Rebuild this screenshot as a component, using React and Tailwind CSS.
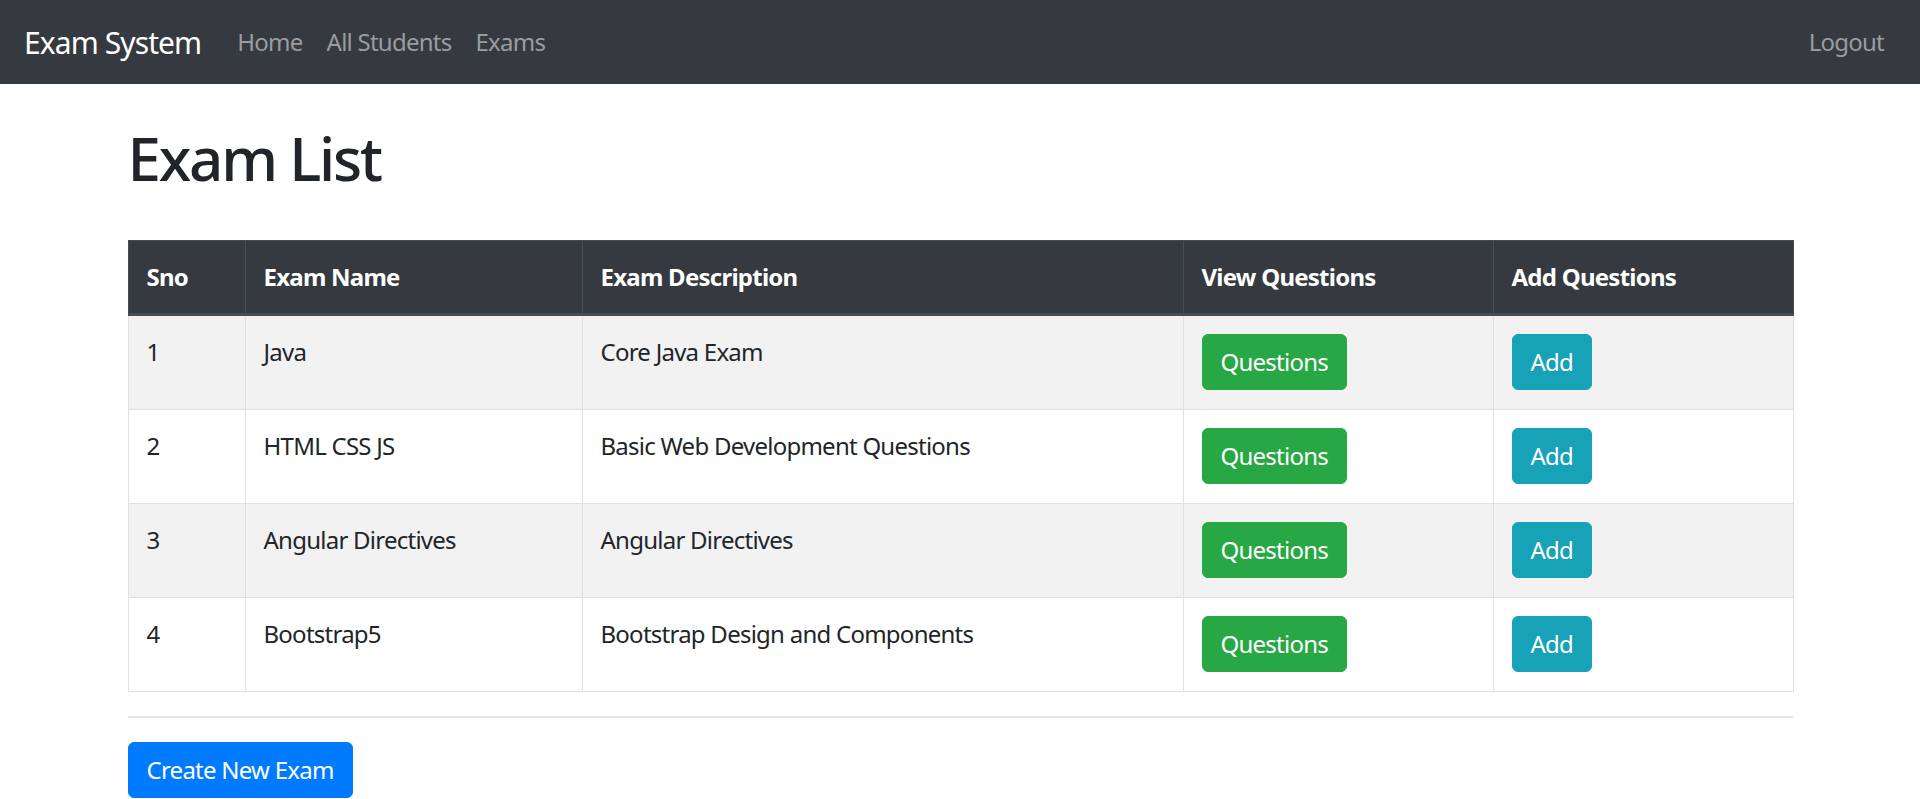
import React from "react";

const rows = [
  { sno: 1, name: "Java", desc: "Core Java Exam" },
  { sno: 2, name: "HTML CSS JS", desc: "Basic Web Development Questions" },
  { sno: 3, name: "Angular Directives", desc: "Angular Directives" },
  { sno: 4, name: "Bootstrap5", desc: "Bootstrap Design and Components" },
];

export default function App() {
  return (
    <div
      className="min-h-[799px] bg-white text-[#212529] text-[24px] leading-[36px] tracking-[-0.75px]"
      style={{ fontFamily: '"Noto Sans", "Open Sans", sans-serif' }}
    >
      <nav className="h-[84px] bg-[#343a40] flex items-center px-[24px]">
        <a className="text-white text-[30px] leading-[45px] mr-[24px] tracking-[-0.9px]">Exam System</a>
        <div className="flex items-center">
          <a className="px-[12px] text-[#9a9da0]">Home</a>
          <a className="px-[12px] text-[#9a9da0]">All Students</a>
          <a className="px-[12px] text-[#9a9da0]">Exams</a>
        </div>
        <div className="ml-auto">
          <a className="px-[12px] text-[#9a9da0]">Logout</a>
        </div>
      </nav>
      <div className="w-[1665px] mx-auto">
        <h1 className="mt-[38px] text-[60px] leading-[72px] font-medium tracking-[-2.2px]">Exam List</h1>
        <table className="mt-[46px] w-[1665px] table-fixed border-collapse">
          <colgroup>
            <col className="w-[117px]" />
            <col className="w-[337px]" />
            <col className="w-[601px]" />
            <col className="w-[310px]" />
            <col className="w-[300px]" />
          </colgroup>
          <thead>
            <tr className="bg-[#343a40] text-white">
              {["Sno", "Exam Name", "Exam Description", "View Questions", "Add Questions"].map((h) => (
                <th
                  key={h}
                  className="text-left font-bold p-[18px] border border-[#454d55] border-b-[3px] align-bottom"
                >
                  {h}
                </th>
              ))}
            </tr>
          </thead>
          <tbody>
            {rows.map((r, i) => (
              <tr key={r.sno} className={i % 2 === 0 ? "bg-[#f2f2f2]" : "bg-white"}>
                <td className="pt-[18px] pb-[19px] px-[18px] border border-[#dee2e6] align-top">{r.sno}</td>
                <td className="pt-[18px] pb-[19px] px-[18px] border border-[#dee2e6] align-top">{r.name}</td>
                <td className="pt-[18px] pb-[19px] px-[18px] border border-[#dee2e6] align-top">{r.desc}</td>
                <td className="pt-[18px] pb-[19px] px-[18px] border border-[#dee2e6] align-top">
                  <button className="bg-[#28a745] border border-[#28a745] text-white rounded-[6px] px-[18px] py-[9px] leading-[36px]">
                    Questions
                  </button>
                </td>
                <td className="pt-[18px] pb-[19px] px-[18px] border border-[#dee2e6] align-top">
                  <button className="bg-[#17a2b8] border border-[#17a2b8] text-white rounded-[6px] px-[18px] py-[9px] leading-[36px]">
                    Add
                  </button>
                </td>
              </tr>
            ))}
          </tbody>
        </table>
        <hr className="mt-[24px] mb-[24px] border-0 border-t-[2px] border-[#e6e6e6]" />
        <button className="bg-[#007bff] border border-[#007bff] text-white rounded-[6px] px-[18px] py-[9px] leading-[36px]">
          Create New Exam
        </button>
      </div>
    </div>
  );
}
